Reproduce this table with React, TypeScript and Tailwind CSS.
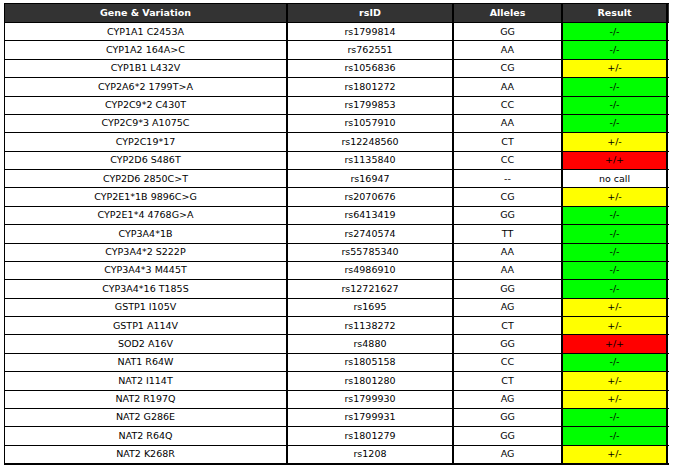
import React from 'react';

type Result = 'neg' | 'het' | 'hom' | 'none';

interface Variant {
  gene: string;
  rsid: string;
  alleles: string;
  result: Result;
}

const variants: Variant[] = [
  { gene: 'CYP1A1 C2453A', rsid: 'rs1799814', alleles: 'GG', result: 'neg' },
  { gene: 'CYP1A2 164A>C', rsid: 'rs762551', alleles: 'AA', result: 'neg' },
  { gene: 'CYP1B1 L432V', rsid: 'rs1056836', alleles: 'CG', result: 'het' },
  { gene: 'CYP2A6*2 1799T>A', rsid: 'rs1801272', alleles: 'AA', result: 'neg' },
  { gene: 'CYP2C9*2 C430T', rsid: 'rs1799853', alleles: 'CC', result: 'neg' },
  { gene: 'CYP2C9*3 A1075C', rsid: 'rs1057910', alleles: 'AA', result: 'neg' },
  { gene: 'CYP2C19*17', rsid: 'rs12248560', alleles: 'CT', result: 'het' },
  { gene: 'CYP2D6 S486T', rsid: 'rs1135840', alleles: 'CC', result: 'hom' },
  { gene: 'CYP2D6 2850C>T', rsid: 'rs16947', alleles: '--', result: 'none' },
  { gene: 'CYP2E1*1B 9896C>G', rsid: 'rs2070676', alleles: 'CG', result: 'het' },
  { gene: 'CYP2E1*4 4768G>A', rsid: 'rs6413419', alleles: 'GG', result: 'neg' },
  { gene: 'CYP3A4*1B', rsid: 'rs2740574', alleles: 'TT', result: 'neg' },
  { gene: 'CYP3A4*2 S222P', rsid: 'rs55785340', alleles: 'AA', result: 'neg' },
  { gene: 'CYP3A4*3 M445T', rsid: 'rs4986910', alleles: 'AA', result: 'neg' },
  { gene: 'CYP3A4*16 T185S', rsid: 'rs12721627', alleles: 'GG', result: 'neg' },
  { gene: 'GSTP1 I105V', rsid: 'rs1695', alleles: 'AG', result: 'het' },
  { gene: 'GSTP1 A114V', rsid: 'rs1138272', alleles: 'CT', result: 'het' },
  { gene: 'SOD2 A16V', rsid: 'rs4880', alleles: 'GG', result: 'hom' },
  { gene: 'NAT1 R64W', rsid: 'rs1805158', alleles: 'CC', result: 'neg' },
  { gene: 'NAT2 I114T', rsid: 'rs1801280', alleles: 'CT', result: 'het' },
  { gene: 'NAT2 R197Q', rsid: 'rs1799930', alleles: 'AG', result: 'het' },
  { gene: 'NAT2 G286E', rsid: 'rs1799931', alleles: 'GG', result: 'neg' },
  { gene: 'NAT2 R64Q', rsid: 'rs1801279', alleles: 'GG', result: 'neg' },
  { gene: 'NAT2 K268R', rsid: 'rs1208', alleles: 'AG', result: 'het' },
];

// label + cell colour for each call
const resultStyle: Record<Result, { label: string; cls: string }> = {
  neg: { label: '-/-', cls: 'bg-[#00ff00]' },
  het: { label: '+/-', cls: 'bg-[#ffff00]' },
  hom: { label: '+/+', cls: 'bg-[#ff0000]' },
  none: { label: 'no call', cls: 'bg-white' },
};

const cols = 'grid grid-cols-[283px_166px_109px_105px]';
const cell = 'flex items-center justify-center border-r-2 border-black';

export default function App() {
  return (
    <div className="w-[675px] h-[468px] bg-white pt-[3px] pl-[4px] font-['DejaVu_Sans',sans-serif] text-[9.5px] text-black">
      <div className="w-[665px] border-l border-b-2 border-black">
        {/* header */}
        <div className={`${cols} h-[19px] bg-[#333333] text-white font-bold border-t border-black`}>
          <div className={cell}>Gene &amp; Variation</div>
          <div className={cell}>rsID</div>
          <div className={cell}>Alleles</div>
          <div className={cell}>Result</div>
        </div>

        {variants.map((v) => {
          const r = resultStyle[v.result];
          return (
            <div key={v.rsid} className={`${cols} h-[18.375px] border-t border-black`}>
              <div className={cell}>{v.gene}</div>
              <div className={cell}>{v.rsid}</div>
              <div className={cell}>{v.alleles}</div>
              <div className={`${cell} ${r.cls}`}>{r.label}</div>
            </div>
          );
        })}
      </div>
    </div>
  );
}
